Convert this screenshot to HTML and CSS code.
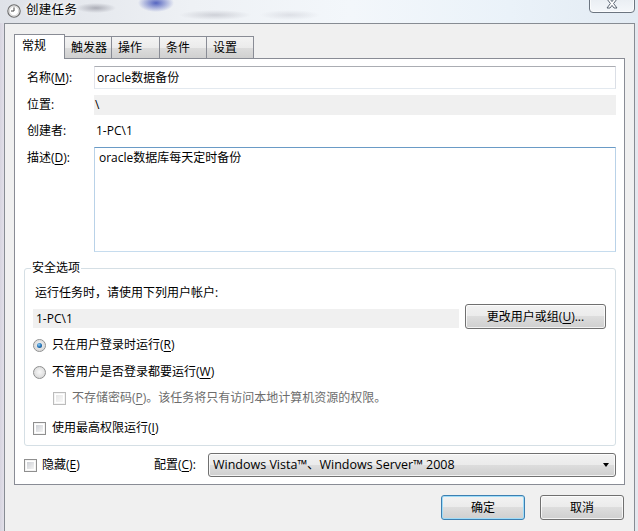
FILE: index.html
```html
<!DOCTYPE html>
<html>
	<head>
		<meta charset="utf-8">
		<title>创建任务</title>
		<link rel="stylesheet" href="styles.css">
	</head>
	<body>
		<div class="titlebar">
			<svg class="appicon" width="14" height="14" viewBox="0 0 14 14">
				<circle cx="7" cy="7" r="6.2" fill="#ededed" stroke="#6b6b6b" stroke-width="1.1"/>
				<circle cx="7" cy="7" r="4.7" fill="#fff" stroke="#bdbdbd" stroke-width=".6"/>
				<path d="M7 3.4V7H4" fill="none" stroke="#444" stroke-width="1"/>
			</svg>
			<span class="title">创建任务</span>
			<div class="close">
				<svg width="14" height="12" viewBox="0 0 14 12">
					<path d="M2 1h3l2 2.6L9 1h3L8.6 5.5 12 10H9L7 7.4 5 10H2l3.4-4.5z" fill="#fff" stroke="#4a5563" stroke-width=".9" stroke-linejoin="round"/>
				</svg>
			</div>
		</div>

		<div class="client">
			<div class="tabs">
				<div class="tab sel">常规</div>
				<div class="tab w48">触发器</div>
				<div class="tab w49">操作</div>
				<div class="tab w48">条件</div>
				<div class="tab w48">设置</div>
			</div>

			<div class="page">
				<div class="fields">
					<div class="lbl">名称(<u>M</u>):</div>
					<div class="edit">oracle数据备份</div>

					<div class="lbl">位置:</div>
					<div class="ro">\</div>

					<div class="lbl">创建者:</div>
					<div class="plain">1-PC\1</div>

					<div class="lbl top">描述(<u>D</u>):</div>
					<div class="memo">oracle数据库每天定时备份</div>
				</div>

				<fieldset class="group">
					<legend>安全选项</legend>
					<div class="hint">运行任务时，请使用下列用户帐户:</div>
					<div class="acct">
						<div class="acctbox">1-PC\1</div>
						<div class="btn chg">更改用户或组(<u>U</u>)...</div>
					</div>
					<div class="opt o1"><span class="radio on"></span>只在用户登录时运行(<u>R</u>)</div>
					<div class="opt o2"><span class="radio"></span>不管用户是否登录都要运行(<u>W</u>)</div>
					<div class="opt o3 dis"><span class="check off"></span>不存储密码(<u>P</u>)。该任务将只有访问本地计算机资源的权限。</div>
					<div class="opt o4"><span class="check"></span>使用最高权限运行(<u>I</u>)</div>
				</fieldset>

				<div class="bottomrow">
					<div class="opt hide"><span class="check"></span>隐藏(<u>E</u>)</div>
					<div class="cfglbl">配置(<u>C</u>):</div>
					<div class="combo">
						<span>Windows Vista™、Windows Server™ 2008</span>
						<span class="arrow"></span>
					</div>
				</div>
			</div>

			<div class="actions">
				<div class="btn dlg def">确定</div>
				<div class="btn dlg">取消</div>
			</div>
		</div>
	</body>
</html>
```

FILE: styles.css
```css
body{
	margin: 0;
	width: 638px;
	height: 531px;
	overflow: hidden;
	font-family: "Open Sans", "Noto Sans CJK SC", sans-serif;
	font-size: 12px;
	line-height: 16px;
	color: #000;
	background: linear-gradient(90deg, #d6d4df 0, #e2e0e9 4px, #dde3ea 4px, #e4e8ee 100%);
}

u{
	text-decoration: underline;
	text-underline-offset: 2px;
}

/* title bar (glass) */
.titlebar{
	height: 23px;
	display: flex;
	align-items: flex-start;
	padding-left: 7px;
	box-sizing: border-box;
	background:
		radial-gradient(ellipse 20px 5px at 96px 8px, rgba(100,100,115,.45), transparent),
		radial-gradient(ellipse 18px 9px at 156px 3px, rgba(35,55,175,.75), transparent),
		radial-gradient(ellipse 36px 5px at 215px 15px, rgba(110,110,125,.25), transparent),
		radial-gradient(ellipse 30px 5px at 290px 15px, rgba(140,140,155,.2), transparent),
		linear-gradient(90deg, #dfe2e8, #eef1f5 30%, #f3f7fb 55%, #eaf2f9 80%, #e3ebf3);
}

.appicon{
	margin-top: 4px;
}

.title{
	margin: 2px 0 0 5px;
	font-size: 12.5px;
	letter-spacing: .3px;
	text-shadow: 0 0 6px #fff, 0 0 3px #fff;
}

.close{
	margin: -6px 3px 0 auto;
	width: 46px;
	height: 19px;
	box-sizing: border-box;
	border: 1px solid #6c7580;
	border-radius: 0 0 4px 4px;
	background: linear-gradient(#e6ebf1, #f4f7fa);
	box-shadow: inset 0 0 0 1px rgba(255,255,255,.7);
	display: flex;
	justify-content: center;
	padding-top: 3px;
}

/* client area */
.client{
	margin: 0 3px 0 4px;
	height: 508px;
	box-sizing: border-box;
	border: 1px solid #878c93;
	border-bottom: 0;
	background: #f0f0f0;
	padding: 10px 9px 0;
}

.tabs{
	display: flex;
	align-items: flex-end;
	height: 24px;
}

.tab{
	box-sizing: border-box;
	height: 22px;
	padding: 3px 0 0 6px;
	margin-left: -1px;
	border: 1px solid #898c95;
	border-bottom: 0;
	background: linear-gradient(#f3f3f3, #ebebeb 50%, #dddddd 50%, #d0d0d0);
}

.tab.w48{ width: 48px; }
.tab.w49{ width: 49px; }

.tab.sel{
	width: 51px;
	height: 25px;
	margin: 0 0 -1px 0;
	padding: 3px 0 0 7px;
	background: #fff;
	position: relative;
	z-index: 1;
}

.page{
	border: 1px solid #898c95;
	background: #fff;
	padding: 7px 8px 7px 9px;
}

.fields{
	display: grid;
	grid-template-columns: 67px 1fr;
	grid-template-rows: 23px 20px 20px 105px;
	row-gap: 6px;
	padding-left: 3px;
}

.lbl{
	align-self: center;
}

.lbl.top{
	align-self: start;
	padding-top: 3px;
}

.edit{
	border: 1px solid;
	border-color: #abadb3 #dbdfe6 #e3e9ef #e2e3ea;
	padding: 0 2px;
	display: flex;
	align-items: center;
}

.ro{
	background: #f0f0f0;
	padding: 2px 1px;
}

.plain{
	padding: 2px 2px;
}

.memo{
	border: 1px solid;
	border-color: #6a9bc6 #b9d2e8 #c6dcee #b9d2e8;
	padding: 2px 4px;
}

/* security group */
.group{
	margin: 8px 0 0 0;
	border: 1px solid #d5dfe5;
	border-radius: 3px;
	padding: 9px 9px 9px 8px;
	min-inline-size: 0;
}

.group legend{
	padding: 0 1px;
	margin-left: -2px;
	line-height: 16px;
}

.hint{
	padding-left: 2px;
}

.acct{
	display: flex;
	align-items: flex-start;
	margin-top: 3px;
}

.acctbox{
	flex: 1;
	height: 19px;
	margin-top: 5px;
	background: #f0f0f0;
	padding: 2px 3px 0;
	box-sizing: border-box;
	line-height: 16px;
}

.btn{
	box-sizing: border-box;
	height: 25px;
	border: 1px solid #707070;
	border-radius: 3px;
	background: linear-gradient(#f2f2f2, #ebebeb 50%, #dddddd 50%, #cfcfcf);
	box-shadow: inset 0 0 0 1px rgba(255,255,255,.75);
	display: flex;
	align-items: center;
	justify-content: center;
}

.btn.chg{
	width: 141px;
	margin-left: 6px;
}

.opt{
	display: flex;
	align-items: center;
	height: 16px;
}

.o1{ margin-top: 8px; }
.o2{ margin-top: 11px; }
.o3{ margin-top: 10px; margin-left: 20px; }
.o4{ margin-top: 14px; }

.dis{
	color: #6d6d6d;
}

.radio{
	width: 13px;
	height: 13px;
	box-sizing: border-box;
	margin-right: 6px;
	border: 1px solid #8e8f8f;
	border-radius: 50%;
	background: radial-gradient(circle at 50% 45%, #f8f8f8, #e2e2e2 55%, #cfcfcf);
}

.radio.on{
	padding: 3px;
	background:
		radial-gradient(circle at 40% 35%, #9fd3f5, #2a7cc0 45%, #0b3f78) content-box,
		radial-gradient(circle at 50% 45%, #f8f8f8, #dcdcdc 60%, #c8c8c8) padding-box;
}

.check{
	width: 13px;
	height: 13px;
	box-sizing: border-box;
	margin-right: 6px;
	border: 1px solid #8f8f8f;
	padding: 2px;
	background:
		linear-gradient(135deg, #cdd0d5, #f4f4f4) content-box,
		#fff;
	box-shadow: inset 0 0 0 1px #f4f4f4;
}

.check.off{
	border-color: #bcbcbc;
	background: linear-gradient(135deg, #e6e6e6, #f8f8f8) content-box, #fff;
}

/* bottom row */
.bottomrow{
	display: flex;
	align-items: center;
	height: 24px;
	margin-top: 7px;
}

.hide{
	width: 130px;
}

.hide .check{
	margin-right: 5px;
}

.cfglbl{
	width: 54px;
}

.combo{
	flex: 1;
	height: 24px;
	box-sizing: border-box;
	border: 1px solid #707070;
	border-radius: 3px;
	background: linear-gradient(#f2f2f2, #ebebeb 50%, #dddddd 50%, #cfcfcf);
	box-shadow: inset 0 0 0 1px rgba(255,255,255,.75);
	display: flex;
	align-items: center;
	padding: 0 6px 0 4px;
	font-size: 12.5px;
}

.arrow{
	margin-left: auto;
	width: 0;
	height: 0;
	border-left: 3.5px solid transparent;
	border-right: 3.5px solid transparent;
	border-top: 4px solid #000;
}

/* dialog buttons */
.actions{
	display: flex;
	justify-content: flex-end;
	gap: 15px;
	margin-top: 10px;
	padding-right: 1px;
}

.btn.dlg{
	width: 84px;
}

.btn.def{
	border-color: #3c7fb1;
	box-shadow: inset 0 0 0 1px #9fdcf8;
}
```
